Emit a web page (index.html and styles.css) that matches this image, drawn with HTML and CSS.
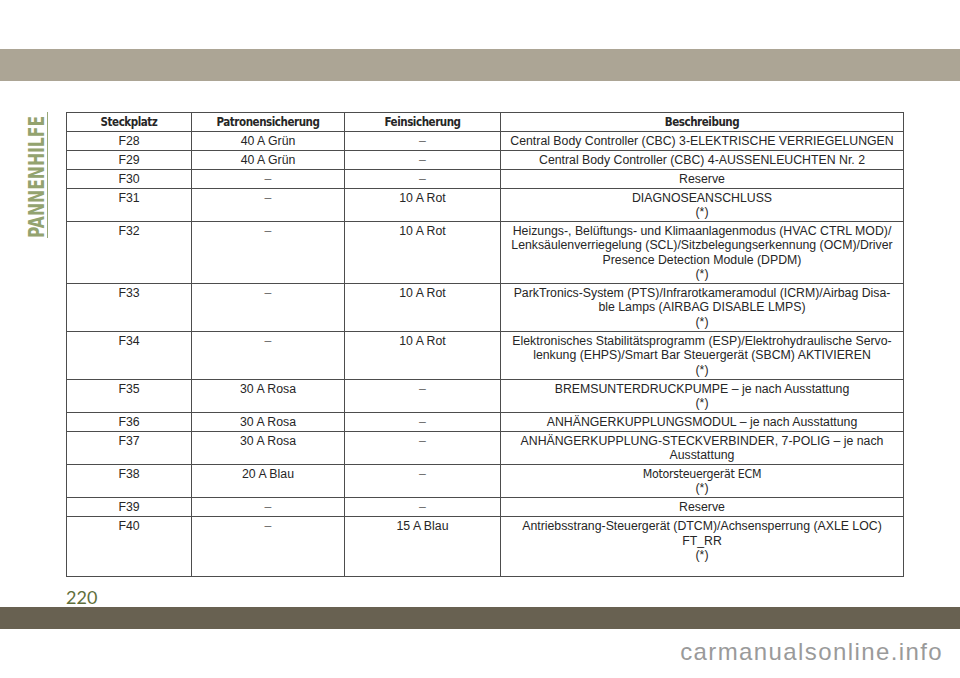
FILE: index.html
```html
<!DOCTYPE html>
<html lang="de">
<head>
<meta charset="utf-8">
<title>Sicherungen</title>
<link rel="stylesheet" href="styles.css">
</head>
<body>
<div class="page">
  <div class="topbar"></div>
  <div class="main">
    <div class="side">
      <div class="tab"><span class="tab-text">PANNENHILFE</span></div>
    </div>
    <table class="fuses">
      <colgroup>
        <col class="c1"><col class="c2"><col class="c3"><col class="c4">
      </colgroup>
      <thead>
        <tr><th>Steckplatz</th><th>Patronensicherung</th><th>Feinsicherung</th><th>Beschreibung</th></tr>
      </thead>
      <tbody>
        <tr><td>F28</td><td>40 A Grün</td><td class="dash">–</td><td>Central Body Controller (CBC) 3-ELEKTRISCHE VERRIEGELUNGEN</td></tr>
        <tr><td>F29</td><td>40 A Grün</td><td class="dash">–</td><td>Central Body Controller (CBC) 4-AUSSENLEUCHTEN Nr. 2</td></tr>
        <tr><td>F30</td><td class="dash">–</td><td class="dash">–</td><td>Reserve</td></tr>
        <tr><td>F31</td><td class="dash">–</td><td>10 A Rot</td><td>DIAGNOSEANSCHLUSS<br>(*)</td></tr>
        <tr><td>F32</td><td class="dash">–</td><td>10 A Rot</td><td>Heizungs-, Belüftungs- und Klimaanlagenmodus (HVAC CTRL MOD)/<br>Lenksäulenverriegelung (SCL)/Sitzbelegungserkennung (OCM)/Driver<br>Presence Detection Module (DPDM)<br>(*)</td></tr>
        <tr><td>F33</td><td class="dash">–</td><td>10 A Rot</td><td>ParkTronics-System (PTS)/Infrarotkameramodul (ICRM)/Airbag Disa-<br>ble Lamps (AIRBAG DISABLE LMPS)<br>(*)</td></tr>
        <tr><td>F34</td><td class="dash">–</td><td>10 A Rot</td><td>Elektronisches Stabilitätsprogramm (ESP)/Elektrohydraulische Servo-<br>lenkung (EHPS)/Smart Bar Steuergerät (SBCM) AKTIVIEREN<br>(*)</td></tr>
        <tr><td>F35</td><td>30 A Rosa</td><td class="dash">–</td><td>BREMSUNTERDRUCKPUMPE – je nach Ausstattung<br>(*)</td></tr>
        <tr><td>F36</td><td>30 A Rosa</td><td class="dash">–</td><td>ANHÄNGERKUPPLUNGSMODUL – je nach Ausstattung</td></tr>
        <tr><td>F37</td><td>30 A Rosa</td><td class="dash">–</td><td>ANHÄNGERKUPPLUNG-STECKVERBINDER, 7-POLIG – je nach<br>Ausstattung</td></tr>
        <tr><td>F38</td><td>20 A Blau</td><td class="dash">–</td><td><span class="narrow">Motorsteuergerät ECM</span><br>(*)</td></tr>
        <tr><td>F39</td><td class="dash">–</td><td class="dash">–</td><td>Reserve</td></tr>
        <tr class="last"><td>F40</td><td class="dash">–</td><td>15 A Blau</td><td>Antriebsstrang-Steuergerät (DTCM)/Achsensperrung (AXLE LOC)<br>FT_RR<br>(*)</td></tr>
      </tbody>
    </table>
  </div>
  <div class="pagenum">220</div>
  <div class="bottombar"></div>
  <div class="watermark">carmanualsonline.info</div>
</div>
</body>
</html>
```

FILE: styles.css
```css
html, body {
  margin: 0;
  padding: 0;
  background: #ffffff;
}

.page {
  width: 960px;
  height: 678px;
  padding-top: 49px;
  box-sizing: border-box;
  overflow: hidden;
  font-family: "Liberation Sans", Arial, sans-serif;
  color: #262626;
}

.topbar {
  height: 32px;
  background: #aca595;
}

.main {
  display: flex;
  align-items: flex-start;
  margin-top: 31px;
}

.side {
  flex: none;
  width: 66px;
}

.tab {
  margin-left: 27px;
  width: 21px;
  height: 126px;
  border-right: 1.5px solid #98a878;
  box-sizing: border-box;
}

.tab-text {
  display: block;
  writing-mode: vertical-rl;
  transform-origin: center top;
  transform: translateY(126px) scaleY(0.79) rotate(180deg);
  font-family: "DejaVu Sans Condensed", "DejaVu Sans", sans-serif;
  font-stretch: condensed;
  font-weight: bold;
  font-size: 22px;
  line-height: 19px;
  color: #93a36f;
  white-space: nowrap;
}

.fuses {
  border-collapse: collapse;
  table-layout: fixed;
  width: 837px;
  font-size: 12.3px;
  line-height: 14.4px;
}

.c1 { width: 125px; }
.c2 { width: 153px; }
.c3 { width: 156px; }
.c4 { width: 403px; }

.fuses th,
.fuses td {
  border: 1px solid #4d4d4d;
  padding: 2px 2px 1.5px 2px;
  text-align: center;
  vertical-align: top;
  white-space: nowrap;
}

.fuses th {
  font-family: "DejaVu Sans Condensed", "DejaVu Sans", sans-serif;
  font-stretch: condensed;
  font-weight: bold;
  font-size: 11.5px;
  letter-spacing: -0.45px;
}

.fuses td.dash {
  color: #6a6a6a;
}

.narrow {
  font-family: "DejaVu Sans Condensed", "DejaVu Sans", sans-serif;
  font-stretch: condensed;
  font-size: 12.3px;
  letter-spacing: -0.3px;
}

.fuses tr.last td {
  padding-bottom: 13.5px;
}

.pagenum {
  margin-left: 66px;
  margin-top: 10px;
  height: 20px;
  font-family: "Lato", "Noto Sans", sans-serif;
  font-size: 18px;
  line-height: 20px;
  color: #5f6f3c;
}

.bottombar {
  height: 22px;
  background: #686151;
}

.watermark {
  text-align: right;
  padding-right: 17px;
  margin-top: 9px;
  font-family: "Liberation Sans", Arial, sans-serif;
  font-size: 24px;
  letter-spacing: 1.4px;
  line-height: 28px;
  color: #9a9a9a;
}
```
